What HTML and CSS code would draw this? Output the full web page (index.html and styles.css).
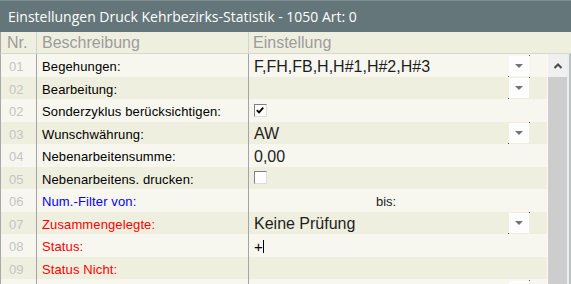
FILE: index.html
```html
<!DOCTYPE html>
<html lang="de">
<head>
    <meta charset="UTF-8">
    <title>Einstellungen Druck Kehrbezirks-Statistik</title>
    <link rel="stylesheet" href="styles.css">
</head>
<body>
<div class="window">
    <div class="titlebar">Einstellungen Druck Kehrbezirks-Statistik - 1050 Art: 0</div>
    <div class="head">
        <div class="cell nr">Nr.</div>
        <div class="cell desc">Beschreibung</div>
        <div class="cell val">Einstellung</div>
    </div>
    <div class="body">
        <div class="rows">
            <div class="row">
                <div class="cell nr">01</div>
                <div class="cell desc">Begehungen:</div>
                <div class="cell val"><span class="text big">F,FH,FB,H,H#1,H#2,H#3</span><span class="drop"></span></div>
            </div>
            <div class="row">
                <div class="cell nr">02</div>
                <div class="cell desc">Bearbeitung:</div>
                <div class="cell val"><span class="text big"></span><span class="drop"></span></div>
            </div>
            <div class="row">
                <div class="cell nr">02</div>
                <div class="cell desc">Sonderzyklus berücksichtigen:</div>
                <div class="cell val">
                    <span class="check">
                        <svg width="13" height="13" viewBox="0 0 13 13"><polyline points="3,6 5.5,8.5 10,3.5" fill="none" stroke="#000" stroke-width="2"/></svg>
                    </span>
                </div>
            </div>
            <div class="row">
                <div class="cell nr">03</div>
                <div class="cell desc">Wunschwährung:</div>
                <div class="cell val"><span class="text big">AW</span><span class="drop"></span></div>
            </div>
            <div class="row">
                <div class="cell nr">04</div>
                <div class="cell desc">Nebenarbeitensumme:</div>
                <div class="cell val"><span class="text big">0,00</span></div>
            </div>
            <div class="row">
                <div class="cell nr">05</div>
                <div class="cell desc">Nebenarbeitens. drucken:</div>
                <div class="cell val"><span class="check"></span></div>
            </div>
            <div class="row">
                <div class="cell nr">06</div>
                <div class="cell desc blue">Num.-Filter von:</div>
                <div class="cell val"><span class="text bis">bis:</span></div>
            </div>
            <div class="row">
                <div class="cell nr">07</div>
                <div class="cell desc red">Zusammengelegte:</div>
                <div class="cell val"><span class="text big">Keine Prüfung</span><span class="drop"></span></div>
            </div>
            <div class="row">
                <div class="cell nr">08</div>
                <div class="cell desc red">Status:</div>
                <div class="cell val"><span class="text plus">+<span class="caret"></span></span></div>
            </div>
            <div class="row">
                <div class="cell nr">09</div>
                <div class="cell desc red">Status Nicht:</div>
                <div class="cell val"><span class="text"></span></div>
            </div>
            <div class="row">
                <div class="cell nr"></div>
                <div class="cell desc"></div>
                <div class="cell val"><span class="text"></span><span class="drop"></span></div>
            </div>
        </div>
        <div class="gap"></div>
        <div class="scrollbar">
            <div class="sb-up">
                <svg width="10" height="6" viewBox="0 0 10 6"><polyline points="1.5,5 5,1.5 8.5,5" fill="none" stroke="#4a4a4a" stroke-width="2"/></svg>
            </div>
            <div class="sb-thumb"></div>
        </div>
        <div class="edge"></div>
    </div>
</div>
</body>
</html>
```

FILE: styles.css
```css
body, html {
    margin: 0;
    background: #ffffff;
    overflow: hidden;
}
body {
    font-family: "Liberation Sans", Arial, sans-serif;
}
.window {
    width: 571px;
    height: 284px;
    display: flex;
    flex-direction: column;
    overflow: hidden;
}
.titlebar {
    height: 32px;
    box-sizing: border-box;
    border-top: 1px solid #7e8e92;
    background-color: #64767a;
    color: #ffffff;
    font-family: "Open Sans", sans-serif;
    font-size: 14px;
    padding-left: 8px;
    display: flex;
    align-items: center;
}
.head {
    height: 22px;
    box-sizing: border-box;
    display: grid;
    grid-template-columns: 36px 212px 1fr;
    background-color: #efefdf;
    border-left: 1px solid #a9a9a9;
    border-bottom: 1px solid #d8d8cc;
    color: #9c9c9c;
    font-size: 16px;
}
.head .cell {
    display: flex;
    align-items: center;
    padding-top: 1px;
}
.head .nr {
    padding-left: 6px;
    border-right: 1px solid #d4d4c8;
}
.head .desc {
    padding-left: 5px;
    border-right: 1px solid #d4d4c8;
}
.head .val {
    padding-left: 4px;
}
.body {
    flex: 1;
    display: flex;
    min-height: 0;
}
.rows {
    width: 547px;
    box-sizing: border-box;
    border-left: 1px solid #a9a9a9;
    display: flex;
    flex-direction: column;
}
.row {
    display: grid;
    grid-template-columns: 36px 212px 1fr;
    flex: none;
    font-size: 13px;
}
.row:nth-child(odd) {
    height: 23px;
    background-color: #f7f7ef;
}
.row:nth-child(even) {
    height: 22px;
    background-color: #efefdf;
}
.row .cell {
    box-sizing: border-box;
    display: flex;
    align-items: center;
    padding-top: 2px;
}
.row .nr {
    padding-left: 8px;
    color: #c4c4c4;
    border-right: 1px solid #a4a4a4;
}
.row .desc {
    padding-left: 5px;
    color: #000000;
    letter-spacing: 0.12px;
    border-right: 1px solid #a4a4a4;
}
.row .desc.blue {
    color: #0000ff;
}
.row .desc.red {
    color: #ff0000;
}
.row .val {
    padding-left: 5px;
    color: #1e1e1e;
}
.text {
    flex: 1;
    display: flex;
    align-items: center;
}
.text.big {
    font-size: 16px;
}
.text.plus {
    font-size: 15px;
    color: #000000;
}
.text.bis {
    padding-left: 122px;
}
.caret {
    display: inline-block;
    width: 1px;
    height: 13px;
    margin-left: 0;
    background: #000000;
}
.drop {
    position: relative;
    width: 20px;
    height: 20px;
    margin-right: 18px;
    margin-top: -2px;
    background: #fdfdfd;
    display: flex;
    justify-content: center;
    align-items: center;
}
.drop::before {
    content: "";
    border-left: 4px solid transparent;
    border-right: 4px solid transparent;
    border-top: 4px solid #737373;
}
.drop::after {
    content: "";
    position: absolute;
    right: -1px;
    top: -1px;
    width: 1px;
    height: 1px;
    background: #555555;
    box-shadow: -21px 21px 0 #555555;
}
.check {
    width: 13px;
    height: 13px;
    box-sizing: border-box;
    margin-top: -3px;
    background: #ffffff;
    border-top: 1px solid #808080;
    border-left: 1px solid #808080;
    border-right: 1px solid #dcdcdc;
    border-bottom: 1px solid #dcdcdc;
    display: flex;
}
.check svg {
    margin: -1px 0 0 -1px;
}
.gap {
    width: 1px;
    background: #fafafa;
}
.scrollbar {
    width: 19px;
    display: flex;
    flex-direction: column;
}
.sb-up {
    height: 23px;
    background: #f0f0f0;
    display: flex;
    justify-content: center;
    align-items: center;
}
.sb-thumb {
    flex: 1;
    background: #cdcdcd;
}
.edge {
    width: 4px;
    background: linear-gradient(to right, #ececec 0, #ececec 2px, #b9c2c5 2px);
}
```
